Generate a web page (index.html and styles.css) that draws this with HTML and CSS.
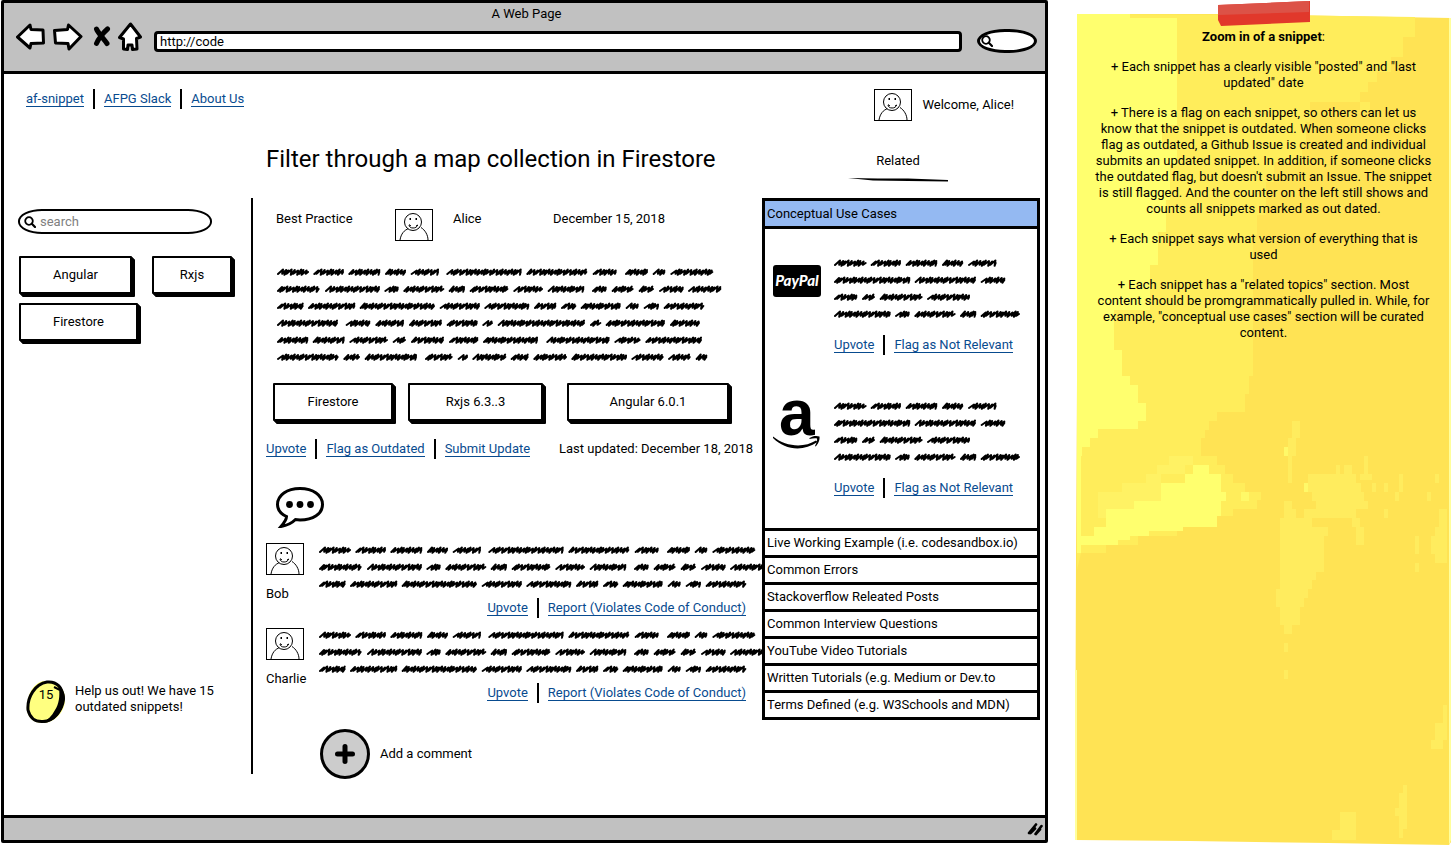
FILE: index.html
```html
<!DOCTYPE html>
<html lang="en">
<head>
<meta charset="utf-8">
<title>A Web Page</title>
<link rel="stylesheet" href="styles.css">
</head>
<body>
<svg class="defs" aria-hidden="true">
  <symbol id="avatar" viewBox="0 0 38 32">
    <rect x="0.5" y="0.5" width="37" height="31" fill="#fff" stroke="#000"/>
    <path d="M5 31C6 25 9 21 14 19.500M26 18.500C30 21 33 26 33 31" fill="none" stroke="#000"/>
    <circle cx="18" cy="13" r="8.500" fill="#fff" stroke="#000"/>
    <path d="M14 16C14 20 22 20 22.500 16M14 15.500l2 1.500M21 17l2-1" fill="none" stroke="#000"/>
    <path d="M14.500 9h1.500v2h-1.500zM20.500 9h1.500v2h-1.500z"/>
  </symbol>
  <symbol id="lens" viewBox="0 0 12 12">
    <circle cx="5" cy="5" r="3.800" fill="none" stroke="#000" stroke-width="1.800"/>
    <path d="M7.800 7.800L11 11" stroke="#000" stroke-width="2.200" stroke-linecap="round"/>
  </symbol>
</svg>
<div class="board">
  <div class="window">
    <header class="chrome">
      <div class="chrome-title">A Web Page</div>
      <div class="toolbar">
        <button class="tool" aria-label="Back"><svg width="30" height="28" viewBox="0 0 30 28"><path d="M1.500 14L14 2L15 6.500L27 7L27.500 20L15 20.500L14 25Z"/></svg></button>
        <button class="tool" aria-label="Forward"><svg width="30" height="28" viewBox="0 0 30 28"><path d="M1.500 7.500L14.500 6.500L15.500 2L28 13.500L16 26L15 20.500L2.500 20Z"/></svg></button>
        <button class="tool tool-stop" aria-label="Stop"><svg width="18" height="22" viewBox="0 0 18 22"><path class="stop" d="M3.500 3C5 7 11 13 14 17.500M14.500 3C11 6 5 13 3.500 17.500"/></svg></button>
        <button class="tool" aria-label="Home"><svg width="24" height="30" viewBox="0 0 24 30"><path d="M12.500 2L22.500 15L18.500 16.500L19 27L14.500 27.500L14 23L10 23L9.500 27.500L5.500 27L5.500 17L1.500 15.500Z"/></svg></button>
        <input class="url" type="text" value="http://code" aria-label="Address">
        <label class="chrome-search"><svg width="12" height="12"><use href="#lens"/></svg><input type="text" aria-label="Web search"></label>
      </div>
    </header>

    <div class="page">
      <div class="topbar">
        <nav class="links"><a href="#">af-snippet</a><a href="#">AFPG Slack</a><a href="#">About Us</a></nav>
        <div class="user"><svg class="avatar"><use href="#avatar"/></svg><span>Welcome, Alice!</span></div>
      </div>
      <div class="headings">
        <h1>Filter through a map collection in Firestore</h1>
        <h2><span>Related</span><svg width="100" height="4" viewBox="0 0 100 4"><path d="M0 0L30 .5L60 .5L100 2V3.500L60 3L25 2.500Z"/></svg></h2>
      </div>

      <div class="columns">
        <aside class="sidebar">
          <label class="search"><svg width="12" height="12"><use href="#lens"/></svg><input type="text" placeholder="search" aria-label="Search snippets"></label>
          <div class="tags">
            <button class="box tag-angular">Angular</button>
            <button class="box tag-rxjs">Rxjs</button>
            <button class="box tag-firestore">Firestore</button>
          </div>
          <div class="help">
            <div class="count"><svg width="40" height="44" viewBox="0 0 40 44"><path d="M17 1C6 4 0 17 1 31C3 39 8 43 17 43C28 43 38 33 39 21C40 10 33 0 17 1Z" fill="#ffff70"/><path d="M21 2C9 4 1 17 2 30C4 38 9 42 17 41.500C28 41 36 31 37 18C37 8 31 1 21 2Z" fill="#ffff80" stroke="#000" stroke-width="3"/><path d="M33 8C34 16 33 24 29 30C26 36 21 40 17 43C29 42 38 31 39 19C39 13 37 9 33 8Z"/><path d="M28 7L34 10" stroke="#000" stroke-width="2"/></svg><span>15</span></div>
            <p>Help us out! We have 15 outdated snippets!</p>
          </div>
        </aside>

        <main class="article">
          <div class="meta"><span class="meta-kind">Best Practice</span><svg class="avatar"><use href="#avatar"/></svg><span class="meta-author">Alice</span><span>December 15, 2018</span></div>
          <svg class="scribble body-text" data-text="article"></svg>
          <div class="versions">
            <button class="box v-firestore">Firestore</button>
            <button class="box v-rxjs">Rxjs 6.3..3</button>
            <button class="box v-angular">Angular 6.0.1</button>
          </div>
          <div class="actions">
            <div class="links"><a href="#">Upvote</a><a href="#">Flag as Outdated</a><a href="#">Submit Update</a></div>
            <span>Last updated: December 18, 2018</span>
          </div>
          <svg class="bubble" width="48" height="41" viewBox="0 0 48 41"><path d="M24 1.500C37 1.500 46.500 8 46.500 17.500C46.500 27 37 33 24 33L19.500 32.500C16 36 11 38.500 5 39.500C8 36 10.500 33 10.500 29.500C5 27 1.500 23 1.500 17.500C1.500 8 11 1.500 24 1.500Z" fill="#fff" stroke="#000" stroke-width="3"/><circle cx="13.500" cy="17.500" r="3.400"/><circle cx="24" cy="17.500" r="3.400"/><circle cx="34.500" cy="17.500" r="3.400"/></svg>

          <section class="comment">
            <div class="person"><svg class="avatar"><use href="#avatar"/></svg><span>Bob</span></div>
            <div class="said"><svg class="scribble" data-text="comment"></svg>
              <div class="links"><a href="#">Upvote</a><a href="#">Report (Violates Code of Conduct)</a></div></div>
          </section>
          <section class="comment">
            <div class="person"><svg class="avatar"><use href="#avatar"/></svg><span>Charlie</span></div>
            <div class="said"><svg class="scribble" data-text="comment"></svg>
              <div class="links"><a href="#">Upvote</a><a href="#">Report (Violates Code of Conduct)</a></div></div>
          </section>
          <div class="add"><button id="add" aria-label="Add"><svg width="20" height="20" viewBox="0 0 20 20"><path d="M10 2.500V17.500M2.500 10H17.500" stroke="#000" stroke-width="5" stroke-linecap="round"/></svg></button><label for="add">Add a comment</label></div>
        </main>

        <aside class="related">
          <button class="row current">Conceptual Use Cases</button>
          <div class="cases">
            <section class="case">
              <div class="paypal">PayPal</div>
              <div><svg class="scribble" data-text="related"></svg>
                <div class="links"><a href="#">Upvote</a><a href="#">Flag as Not Relevant</a></div></div>
            </section>
            <section class="case">
              <svg class="amazon" width="48" height="52" viewBox="0 0 48 52"><text x="6" y="35" class="amazon-a">a</text><path d="M0 36.500C13 47 31 48 43 40.500L44.500 42C30 52 12 50 0 38Z"/><path d="M36.500 38C40 35.500 44 35.500 46.500 36.500C47 40 45 44.500 42.500 46.500L42 46C43.500 43 44.500 40 44 38.500C42 38 39 38.500 36.500 39Z"/></svg>
              <div><svg class="scribble" data-text="related"></svg>
                <div class="links"><a href="#">Upvote</a><a href="#">Flag as Not Relevant</a></div></div>
            </section>
          </div>
          <button class="row">Live Working Example (i.e. codesandbox.io)</button>
          <button class="row">Common Errors</button>
          <button class="row">Stackoverflow Releated Posts</button>
          <button class="row">Common Interview Questions</button>
          <button class="row">YouTube Video Tutorials</button>
          <button class="row">Written Tutorials (e.g. Medium or Dev.to</button>
          <button class="row">Terms Defined (e.g. W3Schools and MDN)</button>
        </aside>
      </div>
    </div>
    <footer class="status"><svg width="16" height="14" viewBox="0 0 16 14"><path d="M2 11L9 2.500M3.500 11L8 6.500M8.500 12L14.500 4M9 12L13 7.500" stroke="#000" stroke-width="2.600" stroke-linecap="round"/></svg></footer>
  </div>

  <aside class="note">
    <svg class="paper" viewBox="0 0 383 845" preserveAspectRatio="none" aria-hidden="true">
      <path d="M7 14L160 14L270 16L381 18L380 700L381 842L379 845L258 843L120 841L5 840L6 560L7 380Z" fill="#ffe354"/>
      <path d="M7 14L200 15L345 17V37H333V57H321V72H307V82H298V92H290V112H300V102H240V122H236V142H232V162H204V182H196V215H187V235H183V376H179V394H175V412H147V421H139V430H135V438H131V456H147V465H155V474H163V483H175V492H191V500H187V509H163V516H147V527H107V536H68V545H36V553H11L7 570Z" fill="#ffed5b"/>
      <path d="M7 14H60V18H107V125H92V150H107V165H100V200H96V232H88V265H80V310H44V350H52V376H60V385H68V403H76V421H68V429H28V438H20V447H12V456H11V553H7Z" fill="#ffff6e"/>
      <path d="M123 465H139V474H151V492H156V501H151V516H147V527H113V531H79V536H60V540H48V545H11V536H24V527H36V509H64V501H91V483H115V474H123Z" fill="#ffff6e"/>
      <path d="M99 456H123V465H115V474H91V501H64V509H36V518H28V492H52V483H76V474H87V465H99Z" fill="#fff264"/>
      <path d="M171 492h8v9h-8zM222 518h8v9h-2v8h-3v-8h-3zM210 545h12v18h-8v-8h-4zM234 483h4v9h-4zM242 492h4v9h-4zM214 447h8v9h-8z" fill="#fff968"/>
      <path d="M222 421H230V438H226V456H222V483H218V438H222ZM238 474H286V483H291V492H294V501H298V509H286V518H290V527H294V545H286V527H282V518H242V527H258V536H254V572H246V580H242V589H238V598H234V607H230V625H222V634H214V625H210V607H206V589H210V518H214V501H222V509H226V518H234V509H246V501H242V492H238ZM266 465h4v9h-4zM274 465h8v9h-8zM294 456h4v18h4v6h-12v-6h4zM329 474h4v18h-4zM302 483h4v9h-4zM314 483h4v9h-4zM365 474h4v9h-4zM357 492h4v9h-4zM325 492h4v9h-4zM314 509h4v9h-4zM345 536h4v18h-4zM345 563h4v9h-4zM377 501V563H365V554H361V536H365V527H369V509H377ZM214 643h4v9h-4zM214 670h4v9h-4zM377 705V740H373V749H361V740H365V723H373V705ZM333 785h4v44h-4v9h-4v-22h-4v-8h4v-15h4zM270 812h16v28h-24v-10h8z" fill="#ffec5e"/>
      <path d="M379 18L381 18L381 840L379 845ZM5 670H7V840H5Z" fill="#ffff9c"/>
    </svg>
    <svg class="tape" width="94" height="27" viewBox="0 0 94 27" aria-hidden="true"><path d="M1 5L93 1V22L4 26L1 20Z" fill="#e1382b"/><path d="M1 5L92 1V12L1 15Z" fill="#dc5247"/></svg>
    <div class="note-text">
      <p><b>Zoom in of a snippet</b>:</p>
      <p>+ Each snippet has a clearly visible "posted" and "last<br>updated" date</p>
      <p>+ There is a flag on each snippet, so others can let us<br>know that the snippet is outdated. When someone clicks<br>flag as outdated, a Github Issue is created and individual<br>submits an updated snippet. In addition, if someone clicks<br>the outdated flag, but doesn't submit an Issue. The snippet<br>is still flagged. And the counter on the left still shows and<br>counts all snippets marked as out dated.</p>
      <p>+ Each snippet says what version of everything that is<br>used</p>
      <p>+ Each snippet has a "related topics" section. Most<br>content should be promgrammatically pulled in. While, for<br>example, "conceptual use cases" section will be curated<br>content.</p>
    </div>
  </aside>
</div>
<script src="scribble.js"></script>
</body>
</html>
```

FILE: styles.css
```css
* { box-sizing: border-box; }
body {
  margin: 0;
  background: #fff;
  color: #000;
  font: 13px/16px Roboto, "Liberation Sans", sans-serif;
}
button, input { font: inherit; color: inherit; padding: 0; margin: 0; }
button { cursor: pointer; }
p, h1, h2 { margin: 0; font-weight: 400; }
svg { display: block; flex: none; }
.defs { position: absolute; width: 0; height: 0; }

.board {
  display: grid;
  grid-template-columns: 1047fr 383fr;
  column-gap: 22px;
  min-height: 100vh;
  padding-left: 1px;
}

/* Browser window */
.window {
  display: flex;
  flex-direction: column;
  min-width: 0;
  margin-bottom: 2px;
  border: 3px solid #000;
  border-radius: 2px;
}
.chrome {
  height: 71px;
  padding: 3px 8px 0 12px;
  background: #c1c1c1;
  border-bottom: 3px solid #000;
}
.chrome-title { text-align: center; }
.toolbar { display: flex; align-items: center; height: 30px; }
.tool { border: 0; background: none; margin-right: 7px; }
.tool path { fill: #fff; stroke: #000; stroke-width: 3; stroke-linejoin: round; }
.tool .stop { fill: none; stroke-width: 5; stroke-linecap: round; }
.tool-stop { margin-left: 3px; }
.url {
  flex: 1;
  min-width: 0;
  height: 21px;
  margin: 8px 15px 0 5px;
  padding: 0 3px;
  background: #fff;
  border: 3px solid #000;
  border-radius: 4px;
}
.chrome-search, .search {
  display: flex;
  align-items: center;
  background: #fff;
  border: 3px solid #000;
}
.chrome-search { width: 60px; height: 24px; margin-top: 8px; padding-left: 1px; border-radius: 28px / 12px; }
.chrome-search input, .search input { width: 100%; min-width: 0; border: 0; background: none; outline: 0; }

/* Page */
.page { flex: 1; padding: 15px 5px 32px 14px; }
.topbar { display: flex; justify-content: space-between; height: 58px; padding: 0 26px 0 8px; }
.links { display: flex; align-items: center; height: 20px; }
.links a {
  color: #084b8f;
  text-decoration: none;
  line-height: 14px;
  border-bottom: 1px solid #084b8f;
}
.links a + a { margin-left: 20px; position: relative; }
.links a + a::before {
  content: "";
  position: absolute;
  left: -11px;
  top: -3px;
  width: 2px;
  height: 20px;
  background: #000;
}
.user { display: flex; align-items: center; gap: 10px; height: 32px; }
.avatar { width: 38px; height: 32px; }
.headings { display: grid; grid-template-columns: 248px 1fr 278px; height: 51px; }
h1 { grid-column: 2; font-size: 24px; line-height: 24px; white-space: nowrap; }
h2 { display: flex; flex-direction: column; align-items: center; gap: 7px; width: 96px; margin-left: 88px; font-size: 13px; line-height: 20px; padding-top: 4px; }

.columns { display: grid; grid-template-columns: 235px 1fr 278px; }
.sidebar {
  display: flex;
  flex-direction: column;
  height: 576px;
  padding-top: 11px;
  border-right: 2px solid #000;
}
.search { width: 194px; height: 25px; gap: 4px; padding-left: 4px; border-width: 2px; border-radius: 24px / 12px; }
.search input::placeholder { color: #808080; opacity: 1; }
.tags { display: flex; flex-wrap: wrap; gap: 9px 20px; padding: 22px 0 0 1px; }
.box {
  height: 38px;
  background: #fff;
  border: 2px solid #000;
  border-radius: 1px;
  box-shadow: 1px 1px #000, 2px 2px #000, 3px 3px #000;
}
.tag-angular { width: 113px; }
.tag-rxjs { width: 80px; }
.tag-firestore { width: 119px; }
.help { display: flex; gap: 9px; margin-top: auto; padding: 0 0 50px 8px; }
.help p { width: 144px; padding-top: 3px; }
.count { position: relative; }
.count span { position: absolute; left: 0; top: 7px; width: 40px; text-align: center; }

.article { min-width: 0; overflow: hidden; padding: 11px 0 0 13px; }
.meta { display: flex; height: 32px; padding: 0 0 0 10px; }
.meta span { line-height: 20px; }
.meta-kind { width: 119px; }
.meta-author { width: 100px; margin-left: 20px; }
.scribble { width: 100%; fill: none; stroke: #000; stroke-width: 2; stroke-linecap: round; stroke-linejoin: round; overflow: visible; }
.body-text { width: auto; margin: 24px 0 0 11px; }
.versions { display: flex; gap: 15px; padding: 16px 0 0 7px; }
.v-firestore { width: 120px; }
.v-rxjs { width: 135px; }
.v-angular { width: 162px; margin-left: 9px; }
.actions { display: flex; align-items: center; justify-content: space-between; height: 20px; margin: 18px 9px 0 0; white-space: nowrap; }
.bubble { margin: 28px 0 15px 10px; }
.comment { display: flex; gap: 15px; height: 85px; }
.person { width: 38px; display: flex; flex-direction: column; gap: 11px; }
.said { flex: 1; min-width: 0; }
.said .links { justify-content: flex-end; margin: 4px 16px 0 0; }
.add { display: flex; align-items: center; gap: 10px; padding: 16px 0 0 54px; }
.add button {
  display: grid;
  place-items: center;
  width: 50px;
  height: 50px;
  background: #ccc;
  border: 3px solid #000;
  border-radius: 50%;
}

.related { display: flex; flex-direction: column; }
.row {
  height: 27px;
  padding: 0 2px;
  text-align: left;
  white-space: nowrap;
  background: #fff;
  border: 3px solid #000;
  border-bottom-width: 0;
}
.row:last-child { height: 30px; border-bottom-width: 3px; }
.current { height: 28px; background: #94b9f2; }
.cases {
  display: flex;
  flex-direction: column;
  gap: 45px;
  height: 302px;
  padding: 27px 9px 0 8px;
  border: 3px solid #000;
  border-bottom: 0;
}
.case { display: grid; grid-template-columns: 48px 1fr; gap: 13px; height: 98px; }
.case .links { margin-top: 11px; }
.paypal {
  width: 48px;
  height: 32px;
  margin-top: 9px;
  background: #000;
  border-radius: 3px;
  color: #fff;
  font: italic 900 15px/30px Lato, sans-serif;
  text-align: center;
}
.amazon { overflow: visible; margin-top: 1px; }
.amazon-a { font: 700 64px "Liberation Sans", sans-serif; }

.status {
  display: flex;
  justify-content: flex-end;
  align-items: center;
  height: 25px;
  padding-right: 2px;
  background: #c1c1c1;
  border-top: 3px solid #000;
}

/* Sticky note */
.note { position: relative; }
.paper { position: absolute; inset: 0; width: 100%; height: 100%; }
.tape { position: absolute; left: 147px; top: 0; }
.note-text {
  position: relative;
  display: flex;
  flex-direction: column;
  gap: 14px;
  padding: 29px 12px 0 16px;
  text-align: center;
}
```

FILE: scribble.js
```javascript
// Greeked text: every line is a list of start,end pairs for its words, in thirds of a pixel.
const TEXTS = {
  article: [
    [0,96,109,201,214,310,324,387,401,486,508,734,748,931,947,1019,1044,1113,1127,1165,1180,1309],
    [0,128,144,309,322,365,379,502,515,564,578,694,709,798,812,922,945,989,1004,1070,1085,1131,1146,1220,1233,1333],
    [0,80,93,235,248,474,488,609,622,757,771,838,852,898,911,1031,1046,1085,1100,1146,1160,1282],
    [0,183,206,280,295,381,396,495,509,602,616,648,662,924,939,973,986,1164,1179,1269],
    [0,94,107,203,217,333,347,387,402,501,516,604,618,783,808,998,1012,1091,1105,1275],
    [0,185,199,249,263,420,444,527,542,573,586,688,701,755,769,870,883,1050,1063,1160,1173,1241,1256,1291]
  ],
  related: [
    [0,98,110,201,215,310,324,388,402,488],
    [0,229,242,426,440,514],
    [0,70,84,123,137,266,279,408],
    [0,170,183,227,241,365,378,427,440,558]
  ]
};
TEXTS.comment = TEXTS.article.slice(0, 3);
const PITCH = 17;

function word(start, end, y, seed) {
  const x0 = start / 3 + 1, x1 = end / 3 - 1;
  let x = x0, i = seed;
  let d = `M${x0} ${y + 2}`;
  while (x < x1 - 3) {
    const open = (i * i + 2 * i) % 5 < 2;
    const lean = open ? 5 : 4;
    const back = open ? 0.8 : 1.8;
    const top = y - 2 + (i % 3 - 1) * 0.5;
    const peak = Math.min(x + lean, x1);
    d += `L${peak.toFixed(1)} ${top.toFixed(1)}L${(peak - back).toFixed(1)} ${(y + 1.8 + i % 2).toFixed(1)}`;
    x = peak - back;
    i++;
  }
  return d + `L${x1} ${y}`;
}

document.querySelectorAll(".scribble").forEach(svg => {
  const lines = TEXTS[svg.dataset.text];
  const path = document.createElementNS("http://www.w3.org/2000/svg", "path");
  let d = "";
  lines.forEach((line, row) => {
    for (let i = 0; i < line.length; i += 2) d += word(line[i], line[i + 1], row * PITCH + 7, row + i);
  });
  path.setAttribute("d", d);
  svg.setAttribute("height", lines.length * PITCH);
  svg.append(path);
});
```
